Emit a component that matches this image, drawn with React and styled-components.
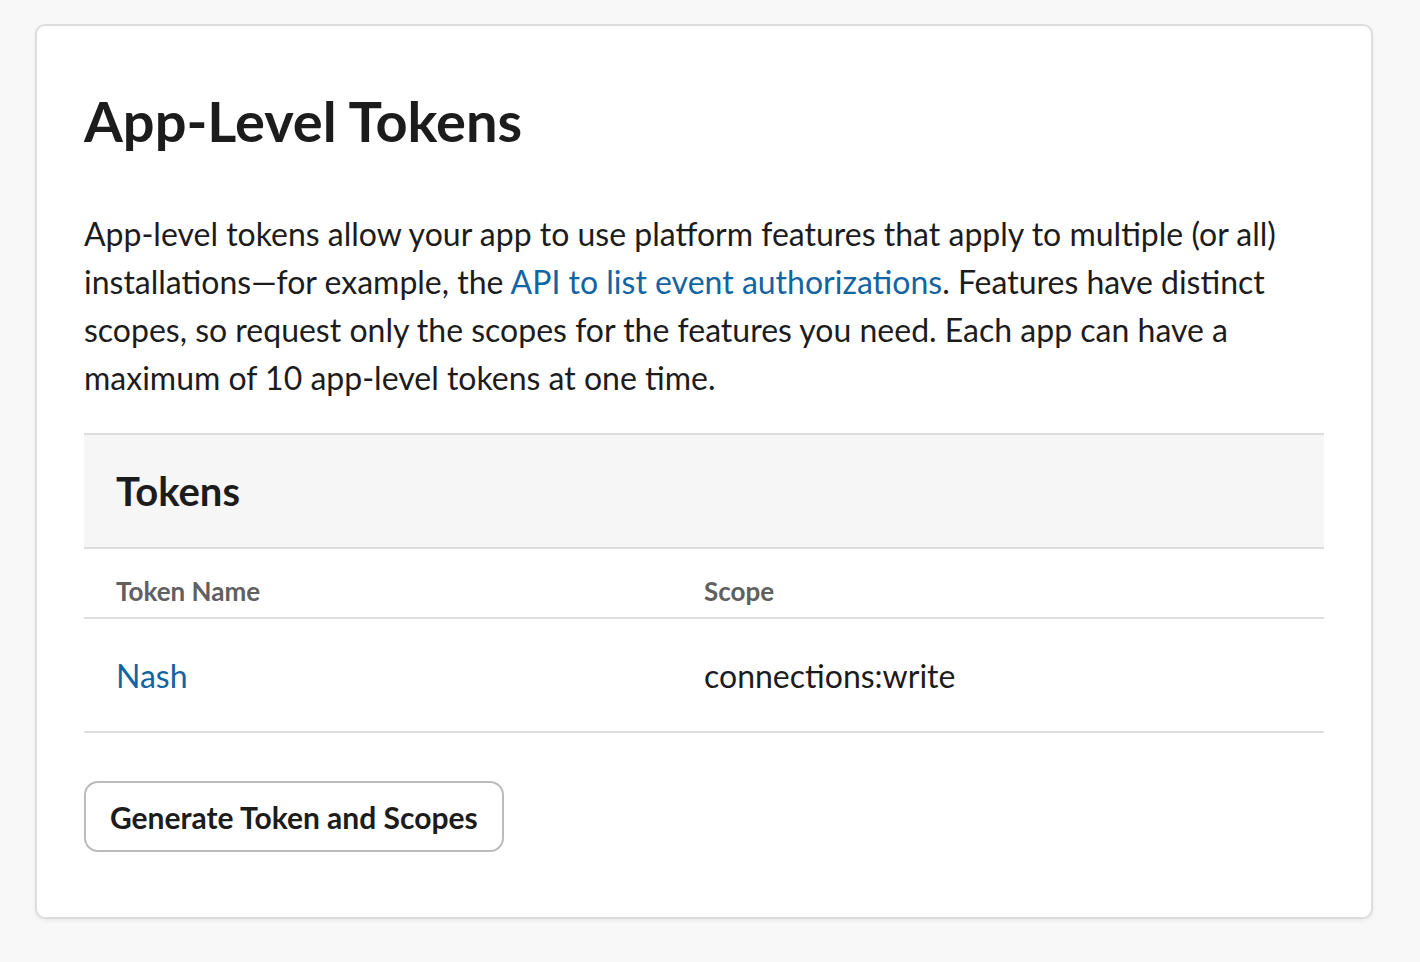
import React from 'react'
import styled, { createGlobalStyle } from 'styled-components'

const GlobalStyle = createGlobalStyle`
  html, body {
    margin: 0;
    padding: 0;
    background: #f8f8f8;
    font-family: Lato, "Helvetica Neue", Arial, sans-serif;
    color: #1d1c1d;
  }
`

const Page = styled.main`
  padding: 24px 0 44px 35px;
`

const Card = styled.section`
  box-sizing: border-box;
  width: 1338px;
  background: #fff;
  border: 2px solid #dddddd;
  border-radius: 10px;
  box-shadow: 0 2px 4px rgba(0, 0, 0, 0.06);
  padding: 61px 47px 65px 47px;
`

const Title = styled.h1`
  margin: 0;
  font-size: 56px;
  line-height: 1.2;
  font-weight: 700;
`

const Intro = styled.p`
  margin: 56px 0 31px;
  font-size: 32px;
  line-height: 48px;
`

const Link = styled.a`
  color: #1264a3;
  text-decoration: none;
`

const Panel = styled.div`
  border-top: 2px solid #dddddd;
`

const PanelHead = styled.h2`
  margin: 0;
  padding: 32px 32px;
  background: #f6f6f6;
  border-bottom: 2px solid #dddddd;
  font-size: 40px;
  line-height: 48px;
  font-weight: 700;
`

const Table = styled.table`
  width: 100%;
  table-layout: fixed;
  border-collapse: collapse;
`

const Column = styled.col`
  width: 50%;
`

const HeadCell = styled.th`
  text-align: left;
  padding: 26px 32px 10px;
  border-bottom: 2px solid #dddddd;
  font-size: 26px;
  line-height: 32px;
  font-weight: 700;
  color: #616061;

  & + & {
    padding-left: 0;
  }
`

const Cell = styled.td`
  padding: 33px 32px 31px;
  border-bottom: 2px solid #dddddd;
  font-size: 32px;
  line-height: 48px;

  & + & {
    padding-left: 0;
  }
`

const Actions = styled.div`
  padding-top: 48px;
`

const Button = styled.button`
  height: 71px;
  padding: 0 24px;
  background: #fff;
  border: 2px solid #bbbbbb;
  border-radius: 14px;
  font-family: inherit;
  font-size: 30px;
  font-weight: 700;
  color: #1d1c1d;
  cursor: pointer;
`

const tokens = [{ name: 'Nash', scope: 'connections:write' }]

export default function App() {
  return (
    <>
      <GlobalStyle />
      <Page>
        <Card>
          <Title>App-Level Tokens</Title>
          <Intro>
            App-level tokens allow your app to use platform features that apply to multiple (or all)
            installations—for example, the <Link href="#">API to list event authorizations</Link>.
            Features have distinct scopes, so request only the scopes for the features you need. Each
            app can have a maximum of 10 app-level tokens at one time.
          </Intro>
          <Panel>
            <PanelHead>Tokens</PanelHead>
            <Table>
              <colgroup>
                <Column />
                <Column />
              </colgroup>
              <thead>
                <tr>
                  <HeadCell>Token Name</HeadCell>
                  <HeadCell>Scope</HeadCell>
                </tr>
              </thead>
              <tbody>
                {tokens.map((t) => (
                  <tr key={t.name}>
                    <Cell>
                      <Link href="#">{t.name}</Link>
                    </Cell>
                    <Cell>{t.scope}</Cell>
                  </tr>
                ))}
              </tbody>
            </Table>
          </Panel>
          <Actions>
            <Button>Generate Token and Scopes</Button>
          </Actions>
        </Card>
      </Page>
    </>
  )
}
